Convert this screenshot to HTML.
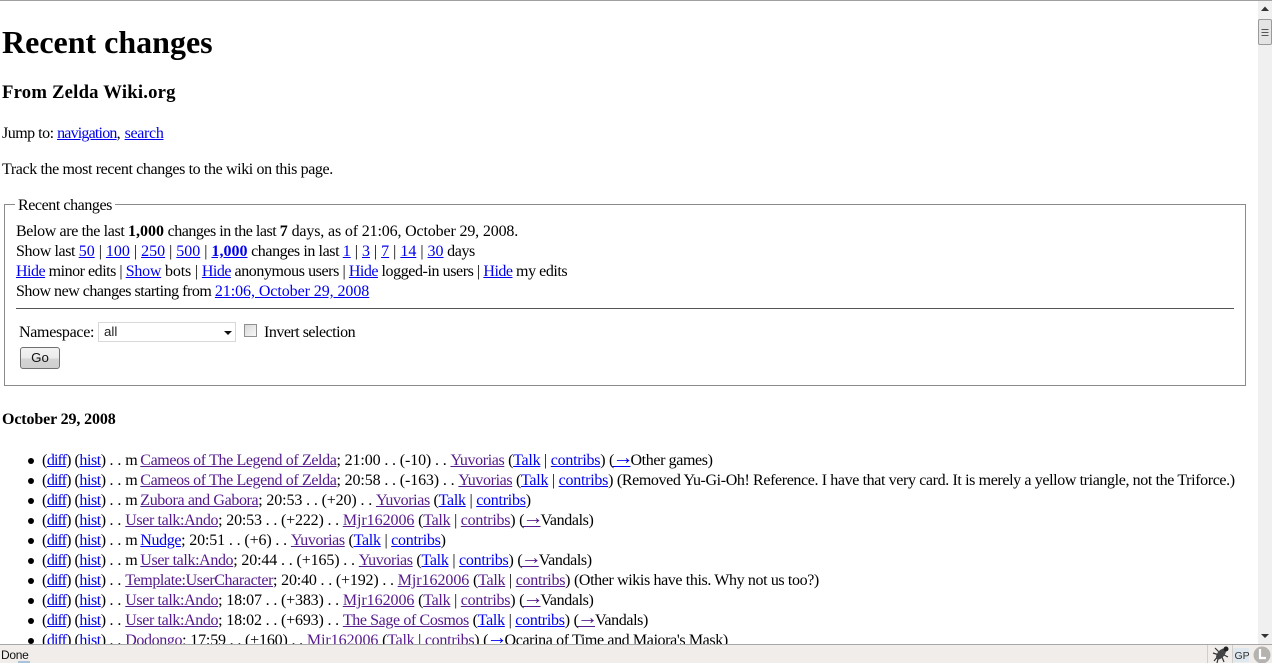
<!DOCTYPE html>
<html><head><meta charset="utf-8"><style>
html,body{margin:0;padding:0;width:1272px;height:663px;overflow:hidden;background:#fff}
body{font-family:"Liberation Serif",serif;font-size:16px;color:#000;position:relative}
.l{position:absolute;white-space:nowrap;line-height:20px;height:20px}
a{color:#0000ee;text-decoration:underline}
a.v{color:#551a8b}
#clip{position:absolute;left:0;top:0;width:1258px;height:644px;overflow:hidden}
li{position:absolute;left:42px;white-space:nowrap;line-height:20px;list-style:none;letter-spacing:-.38px}
li:before{content:"";position:absolute;left:-14px;top:7px;width:6px;height:6px;border-radius:50%;background:#000}
ul{margin:0;padding:0}
.p{letter-spacing:-.45px}
.p a:first-child{letter-spacing:-.9px}
.s{letter-spacing:-.08px}
.m{letter-spacing:-.7px}
.n{letter-spacing:-.13px}
.n2{letter-spacing:-.17px}
.j{letter-spacing:-.05px}
.t{letter-spacing:-.26px}
.ar{letter-spacing:-3px;margin-left:-1.500px;font-size:21px;line-height:0;vertical-align:1px;text-decoration:none}
b{letter-spacing:0}
</style></head><body>
<div style="position:absolute;left:0;top:0;width:1272px;height:1px;background:#a0a0a0"></div>
<div id="clip">
<div class="l" style="left:2px;top:22px;font-size:32px;font-weight:bold;line-height:40px;height:40px">Recent changes</div>
<div class="l" style="left:2px;top:83px;font-size:18.72px;font-weight:bold;letter-spacing:.2px">From Zelda Wiki.org</div>
<div class="l" style="left:2px;top:124px"><span style="letter-spacing:-.5px">Jump to: </span><a href="#" style="letter-spacing:-.8px">navigation</a>, <a href="#" style="letter-spacing:-.33px">search</a></div>
<div class="l" style="left:2px;top:160px;letter-spacing:-.38px">Track the most recent changes to the wiki on this page.</div>
<div style="position:absolute;left:4px;top:204px;width:1240px;height:180px;border:1px solid #8a8a8a"></div>
<div class="l" style="left:15px;top:196px;background:#fff;padding:0 3px;letter-spacing:-.43px">Recent changes</div>
<div class="l" style="left:16px;top:222px"><span style="letter-spacing:-.37px">Below are the last </span><b>1,000</b><span style="letter-spacing:-.48px"> changes in the last </span><b>7</b><span style="letter-spacing:-.15px"> days, as of 21:06, October 29, 2008.</span></div>
<div class="l" style="left:16px;top:242px"><span style="letter-spacing:-.4px">Show last </span><a href="#">50</a> | <a href="#">100</a> | <a href="#">250</a> | <a href="#">500</a> | <a href="#"><b>1,000</b></a><span style="letter-spacing:-.41px"> changes in last </span><a href="#">1</a> | <a href="#">3</a> | <a href="#">7</a> | <a href="#">14</a> | <a href="#">30</a><span style="letter-spacing:-.4px"> days</span></div>
<div class="l" style="left:16px;top:262px"><a href="#" style="letter-spacing:-.5px">Hide</a><span style="letter-spacing:-.47px"> minor edits | </span><a href="#" style="letter-spacing:-.25px">Show</a><span style="letter-spacing:-.15px"> bots | </span><a href="#" style="letter-spacing:-.5px">Hide</a><span style="letter-spacing:-.42px"> anonymous users | </span><a href="#" style="letter-spacing:-.5px">Hide</a><span style="letter-spacing:-.42px"> logged-in users | </span><a href="#" style="letter-spacing:-.5px">Hide</a><span style="letter-spacing:-.44px"> my edits</span></div>
<div class="l" style="left:16px;top:282px"><span style="letter-spacing:-.48px">Show new changes starting from </span><a href="#" style="letter-spacing:-.07px">21:06, October 29, 2008</a></div>
<div style="position:absolute;left:16px;top:308px;width:1218px;height:1px;background:#555"></div>
<div class="l" style="left:19px;top:323px;letter-spacing:-.3px">Namespace:</div>
<div style="position:absolute;left:98px;top:322px;width:136px;height:18px;border:1px solid #d8d8d8;font:13.3px/18px 'Liberation Sans',sans-serif;color:#222;text-indent:5px">all
<svg width="8" height="5" style="position:absolute;left:125px;top:8px"><path d="M0 0H8L4 4z" fill="#111"/></svg></div>
<div style="position:absolute;left:244px;top:324px;width:11px;height:11px;border:1px solid #8e8f8f;background:linear-gradient(135deg,#d8d8d8,#f8f8f8)"></div>
<div class="l" style="left:264px;top:323px;letter-spacing:-.5px">Invert selection</div>
<div style="position:absolute;left:20px;top:347px;width:38px;height:20px;border:1px solid #707070;border-radius:3px;background:linear-gradient(#f2f2f2 0,#ebebeb 50%,#d4d4d4 55%,#cfcfcf);font:13.3px/20px 'Liberation Sans',sans-serif;text-align:center;color:#111">Go</div>
<div class="l" style="left:2px;top:410px;font-weight:bold;letter-spacing:-.13px">October 29, 2008</div>
<ul>
<li style="top:451px"><span class="p">(<a href="#">diff</a>) (<a href="#">hist</a>)<span class="s"> . . </span></span><span class="m">m </span><a class="v" href="#">Cameos of The Legend of Zelda</a><span class="n">; 21:00 . . (-10) . . </span><a class="v" href="#">Yuvorias</a><span class="t"> (<a href="#">Talk</a> | <a href="#">contribs</a>) </span>(<a href="#"><span class="ar">→</span></a>Other games)</li>
<li style="top:471px"><span class="p">(<a href="#">diff</a>) (<a href="#">hist</a>)<span class="s"> . . </span></span><span class="m">m </span><a class="v" href="#">Cameos of The Legend of Zelda</a><span class="n">; 20:58 . . (-163) . . </span><a class="v" href="#">Yuvorias</a><span class="t"> (<a href="#">Talk</a> | <a href="#">contribs</a>) </span>(Removed Yu-Gi-Oh! Reference. I have that very card. It is merely a yellow triangle, not the Triforce.)</li>
<li style="top:491px"><span class="p">(<a href="#">diff</a>) (<a href="#">hist</a>)<span class="s"> . . </span></span><span class="m">m </span><a class="v" href="#">Zubora and Gabora</a><span class="n">; 20:53 . . (+20) . . </span><a class="v" href="#">Yuvorias</a><span class="t"> (<a href="#">Talk</a> | <a href="#">contribs</a>)</span></li>
<li style="top:511px"><span class="p">(<a href="#">diff</a>) (<a href="#">hist</a>)<span class="s"> . . </span></span><a class="v" href="#">User talk:Ando</a><span class="n2">; 20:53 . . (+222) . . </span><a class="v j" href="#">Mjr162006</a><span class="t"> (<a class="v" href="#">Talk</a> | <a class="v" href="#">contribs</a>) </span>(<a class="v" href="#"><span class="ar">→</span></a>Vandals)</li>
<li style="top:531px"><span class="p">(<a href="#">diff</a>) (<a href="#">hist</a>)<span class="s"> . . </span></span><span class="m">m </span><a href="#">Nudge</a><span class="n">; 20:51 . . (+6) . . </span><a class="v" href="#">Yuvorias</a><span class="t"> (<a href="#">Talk</a> | <a href="#">contribs</a>)</span></li>
<li style="top:551px"><span class="p">(<a href="#">diff</a>) (<a href="#">hist</a>)<span class="s"> . . </span></span><span class="m">m </span><a class="v" href="#">User talk:Ando</a><span class="n">; 20:44 . . (+165) . . </span><a class="v" href="#">Yuvorias</a><span class="t"> (<a href="#">Talk</a> | <a href="#">contribs</a>) </span>(<a class="v" href="#"><span class="ar">→</span></a>Vandals)</li>
<li style="top:571px"><span class="p">(<a href="#">diff</a>) (<a href="#">hist</a>)<span class="s"> . . </span></span><a class="v" href="#">Template:UserCharacter</a><span class="n2">; 20:40 . . (+192) . . </span><a class="v j" href="#">Mjr162006</a><span class="t"> (<a class="v" href="#">Talk</a> | <a class="v" href="#">contribs</a>) </span>(Other wikis have this. Why not us too?)</li>
<li style="top:591px"><span class="p">(<a href="#">diff</a>) (<a href="#">hist</a>)<span class="s"> . . </span></span><a class="v" href="#">User talk:Ando</a><span class="n2">; 18:07 . . (+383) . . </span><a class="v j" href="#">Mjr162006</a><span class="t"> (<a class="v" href="#">Talk</a> | <a class="v" href="#">contribs</a>) </span>(<a class="v" href="#"><span class="ar">→</span></a>Vandals)</li>
<li style="top:611px"><span class="p">(<a href="#">diff</a>) (<a href="#">hist</a>)<span class="s"> . . </span></span><a class="v" href="#">User talk:Ando</a><span class="n2">; 18:02 . . (+693) . . </span><a class="v" href="#">The Sage of Cosmos</a><span class="t"> (<a href="#">Talk</a> | <a href="#">contribs</a>) </span>(<a class="v" href="#"><span class="ar">→</span></a>Vandals)</li>
<li style="top:631px"><span class="p">(<a href="#">diff</a>) (<a href="#">hist</a>)<span class="s"> . . </span></span><a class="v" href="#">Dodongo</a><span class="n2">; 17:59 . . (+160) . . </span><a class="v j" href="#">Mjr162006</a><span class="t"> (<a class="v" href="#">Talk</a> | <a class="v" href="#">contribs</a>) </span>(<a href="#"><span class="ar">→</span></a>Ocarina of Time and Majora's Mask)</li>
</ul>
</div>
<!-- scrollbar -->
<div style="position:absolute;left:1258px;top:1px;width:14px;height:643px;background:#f0f0f0"></div>
<svg width="14" height="643" style="position:absolute;left:1258px;top:1px"><path d="M3 10L7 5.500L11 10z" fill="#333"/><path d="M3 633L11 633L7 637z" fill="#333"/>
<rect x="0.500" y="18.500" width="13" height="25" rx="1.500" fill="#e4e4e4" stroke="#9a9a9a"/><path d="M3.500 28.500H10.500M3.500 31.500H10.500M3.500 34.500H10.500" stroke="#555"/></svg>
<!-- status bar -->
<div style="position:absolute;left:0;top:644px;width:1272px;height:19px;background:#f0edea;border-top:1px solid #a8a8a8;box-sizing:border-box"></div>
<div class="l" style="left:1px;top:645px;font:12px/20px 'Liberation Sans',sans-serif;color:#111;letter-spacing:-.3px">Done</div>
<div style="position:absolute;left:18px;top:661px;width:12px;height:2px;background:#a9c3dc"></div>
<div style="position:absolute;left:1207px;top:645px;width:1px;height:18px;background:#d0cdca"></div>
<div style="position:absolute;left:1232px;top:645px;width:1px;height:18px;background:#d0cdca"></div>
<svg width="66" height="19" style="position:absolute;left:1206px;top:644px">
<g fill="none" stroke="#333" stroke-width="1.200"><path d="M8 17L13 11M7 9L13 11M9 4L14 9M16 13L18 18M12 15L11 19M18 11L22 13"/></g>
<ellipse cx="15" cy="10" rx="3.500" ry="6.500" transform="rotate(40 15 10)" fill="#444"/><circle cx="20" cy="5" r="2.500" fill="#222"/>
<rect x="27" y="4" width="16" height="14" fill="#dfe8ee"/>
<text x="28.500" y="15" font-family="Liberation Sans" font-size="10.500" fill="#333">GP</text>
<circle cx="56" cy="11" r="8.500" fill="#b5b3b0"/><path d="M54 5V14H60" stroke="#fff" stroke-width="2.200" fill="none"/>
</svg>
</body></html>
